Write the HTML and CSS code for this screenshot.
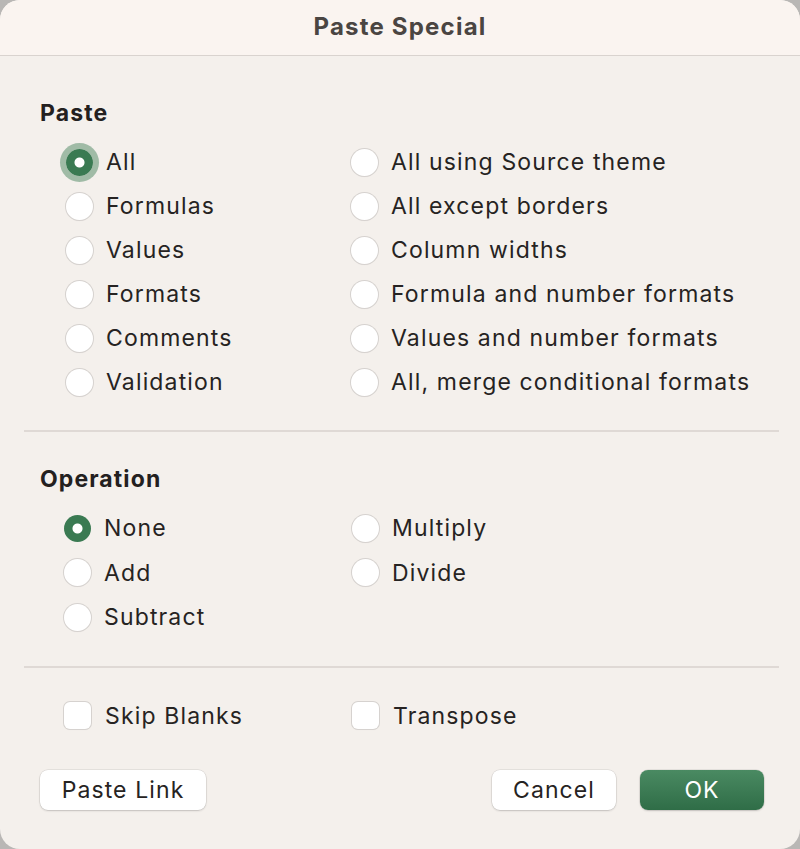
FILE: index.html
```html
<!DOCTYPE html>
<html lang="en">
<head>
  <meta charset="UTF-8">
  <meta name="viewport" content="width=device-width, initial-scale=1.0">
  <title>Paste Special</title>
  <link rel="stylesheet" href="styles.css">
</head>
<body>
  <div class="window">
    <div class="titlebar">Paste Special</div>

    <div class="group group-paste">
      <h3>Paste</h3>
      <div class="options">
        <label class="option"><span class="radio checked focused"></span>All</label>
        <label class="option"><span class="radio"></span>All using Source theme</label>
        <label class="option"><span class="radio"></span>Formulas</label>
        <label class="option"><span class="radio"></span>All except borders</label>
        <label class="option"><span class="radio"></span>Values</label>
        <label class="option"><span class="radio"></span>Column widths</label>
        <label class="option"><span class="radio"></span>Formats</label>
        <label class="option"><span class="radio"></span>Formula and number formats</label>
        <label class="option"><span class="radio"></span>Comments</label>
        <label class="option"><span class="radio"></span>Values and number formats</label>
        <label class="option"><span class="radio"></span>Validation</label>
        <label class="option"><span class="radio"></span>All, merge conditional formats</label>
      </div>
    </div>

    <hr class="divider">

    <div class="group group-operation">
      <h3>Operation</h3>
      <div class="options">
        <label class="option"><span class="radio checked"></span>None</label>
        <label class="option"><span class="radio"></span>Multiply</label>
        <label class="option"><span class="radio"></span>Add</label>
        <label class="option"><span class="radio"></span>Divide</label>
        <label class="option"><span class="radio"></span>Subtract</label>
      </div>
    </div>

    <hr class="divider">

    <div class="group group-checks">
      <div class="options">
        <label class="option"><span class="checkbox"></span>Skip Blanks</label>
        <label class="option"><span class="checkbox"></span>Transpose</label>
      </div>
    </div>

    <div class="buttons">
      <button class="button link">Paste Link</button>
      <div class="right-buttons">
        <button class="button cancel">Cancel</button>
        <button class="button primary">OK</button>
      </div>
    </div>
  </div>
</body>
</html>
```

FILE: styles.css
```css
body {
  margin: 0;
  background-color: #b9b7b5;
  font-family: Inter, "Noto Sans", sans-serif;
  color: #262322;
}
.window {
  width: 800px;
  height: 849px;
  background-color: #f4f0ec;
  border-radius: 20px;
  overflow: hidden;
}
.titlebar {
  height: 56px;
  line-height: 54px;
  background-color: #faf4f0;
  border-bottom: 1px solid #d9d3cf;
  box-sizing: border-box;
  text-align: center;
  font-size: 24px;
  letter-spacing: 1.2px;
  font-weight: 700;
  color: #4a4542;
}
.group h3 {
  margin: 0;
  padding-left: 40px;
  font-size: 23px;
  letter-spacing: 1.1px;
  line-height: 28px;
  font-weight: 700;
  color: #232020;
}
.group-paste {
  padding-top: 43px;
}
.group-paste .options {
  padding-left: 66px;
  margin-top: 13px;
}
.group-operation {
  padding-top: 33px;
}
.group-operation .options {
  padding-left: 64px;
  margin-top: 13px;
  grid-template-columns: 288px 1fr;
}
.group-checks {
  padding-top: 26px;
}
.group-checks .options {
  padding-left: 64px;
}
.options {
  display: grid;
  grid-template-columns: 285px 1fr;
}
.group-operation .options .option {
  height: 44.5px;
}
.option {
  display: flex;
  align-items: center;
  height: 44px;
  font-size: 23px;
  letter-spacing: 1.15px;
}
.radio {
  width: 27px;
  height: 27px;
  border-radius: 50%;
  background-color: #fff;
  box-shadow: 0 0 0 1px #d6d2cf, 0 1px 1px rgba(0, 0, 0, 0.08);
  margin-right: 13px;
  flex-shrink: 0;
  box-sizing: border-box;
}
.radio.checked {
  background: radial-gradient(circle, #fff 0 4.5px, #3a7a52 5.5px);
  box-shadow: none;
}
.radio.focused {
  box-shadow: 0 0 0 6px rgba(58, 122, 82, 0.45);
}
.checkbox {
  width: 27px;
  height: 27px;
  border-radius: 6px;
  background-color: #fff;
  box-shadow: 0 0 0 1px #d6d2cf, 0 1px 1px rgba(0, 0, 0, 0.06);
  margin-right: 14px;
  flex-shrink: 0;
}
.group-checks .option:last-child .checkbox {
  margin-left: 3px;
}
.divider {
  border: none;
  border-top: 2px solid #dfd9d5;
  margin: 26px 21px 0 24px;
}
.buttons {
  display: flex;
  justify-content: space-between;
  padding: 32px 36px 0 40px;
}
.right-buttons {
  display: flex;
  gap: 24px;
}
.button {
  height: 40px;
  padding: 0;
  border: none;
  border-radius: 8px;
  background-color: #fff;
  box-shadow: 0 0 0 0.5px rgba(0, 0, 0, 0.12), 0 1px 2px rgba(0, 0, 0, 0.15);
  font-family: Inter, "Noto Sans", sans-serif;
  font-size: 23px;
  letter-spacing: 1.1px;
  color: #262322;
  cursor: pointer;
}
.link {
  width: 166px;
}
.cancel {
  width: 124px;
}
.primary {
  width: 124px;
  color: #fff;
  background: linear-gradient(#4a8a62, #2f6d47);
}
```
